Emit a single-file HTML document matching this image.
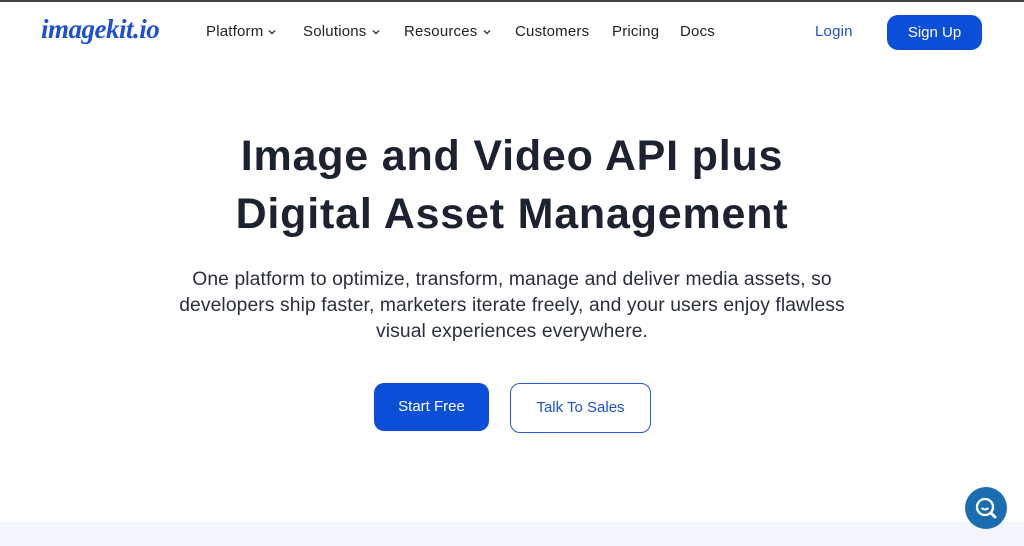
<!DOCTYPE html>
<html><head><style>
*{margin:0;padding:0;box-sizing:border-box}
body{width:1024px;height:546px;overflow:hidden;background:#fff;font-family:"Liberation Sans",sans-serif;position:relative;color:#1b2333}
.top{position:absolute;left:0;top:0;width:1024px;height:2px;background:#444}
.logo{position:absolute;left:41px;top:14px;font-family:"Liberation Serif",serif;font-style:italic;font-weight:bold;font-size:27px;color:#1d4fd0;letter-spacing:-0.5px}
.nav{position:absolute;top:23px;font-size:15px;line-height:18px;color:#222;letter-spacing:0.2px;white-space:nowrap}
.nav svg{margin-left:5px;vertical-align:middle}
.btn-su{position:absolute;left:887px;top:15px;width:95px;height:35px;border-radius:11px;background:#0b4fd8;color:#fff;font-size:15px;text-align:center;line-height:35px}
h1{position:absolute;left:0;width:1024px;top:127px;text-align:center;font-size:43px;line-height:58px;font-weight:bold;color:#1c2230;letter-spacing:0.8px}
p{position:absolute;left:0;width:1024px;top:267px;text-align:center;font-size:19.3px;line-height:26px;color:#2a2f3a;letter-spacing:0.1px}
.b1{position:absolute;left:374px;top:383px;width:115px;height:48px;border-radius:10px;background:#0b4fd8;color:#fff;font-size:15px;text-align:center;line-height:48px}
.b2{position:absolute;left:510px;top:383px;width:141px;height:50px;border-radius:10px;border:1px solid #2a5bd0;color:#1d4fd0;font-size:15px;text-align:center;line-height:48px}
.band{position:absolute;left:0;top:522px;width:1024px;height:24px;background:#f2f5fc}
.chat{position:absolute;left:965px;top:487px;width:42px;height:42px;border-radius:50%;background:#1a6db0}
</style></head><body>
<div class="top"></div>
<div class="logo">imagekit.io</div>
<div class="nav" style="left:206px">Platform<svg width="8" height="6" viewBox="0 0 8 6"><path d="M1 1.5l3 3 3-3" fill="none" stroke="#333" stroke-width="1.4"/></svg></div>
<div class="nav" style="left:303px">Solutions<svg width="8" height="6" viewBox="0 0 8 6"><path d="M1 1.5l3 3 3-3" fill="none" stroke="#333" stroke-width="1.4"/></svg></div>
<div class="nav" style="left:404px">Resources<svg width="8" height="6" viewBox="0 0 8 6"><path d="M1 1.5l3 3 3-3" fill="none" stroke="#333" stroke-width="1.4"/></svg></div>
<div class="nav" style="left:515px">Customers</div>
<div class="nav" style="left:612px">Pricing</div>
<div class="nav" style="left:680px">Docs</div>
<div class="nav" style="left:815px;color:#1d4fd0">Login</div>
<div class="btn-su">Sign Up</div>
<h1>Image and Video API plus<br>Digital Asset Management</h1>
<p>One platform to optimize, transform, manage and deliver media assets, so<br>developers ship faster, marketers iterate freely, and your users enjoy flawless<br>visual experiences everywhere.</p>
<div class="b1">Start Free</div>
<div class="b2">Talk To Sales</div>
<div class="band"></div>
<div class="chat"><svg width="42" height="42" viewBox="0 0 42 42"><circle cx="20" cy="20" r="8" fill="none" stroke="#fff" stroke-width="2.3"/><path d="M16.5 21q3.5 3 7 0" fill="none" stroke="#fff" stroke-width="2"/><path d="M26 26l4 4" stroke="#fff" stroke-width="3" stroke-linecap="round"/></svg></div>
</body></html>
